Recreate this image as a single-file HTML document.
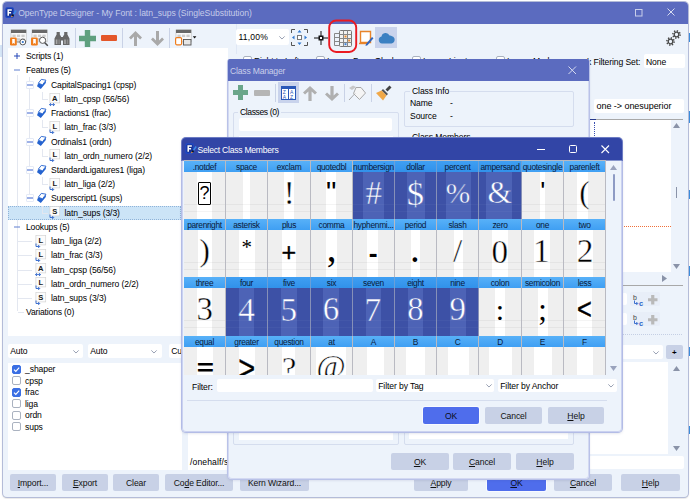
<!DOCTYPE html><html><head><meta charset="utf-8"><title>OpenType Designer</title><style>
*{box-sizing:border-box;margin:0;padding:0}
html,body{width:690px;height:499px;overflow:hidden;background:#fff}
body{position:relative;font-family:"Liberation Sans",sans-serif;font-size:8.6px;color:#000;letter-spacing:-0.1px;line-height:11px}
.a{position:absolute}
.t{position:absolute;white-space:nowrap;line-height:11px;height:11px}
.btn{position:absolute;background:#c8d1e6;border-radius:2px;text-align:center;line-height:17px;height:17px;color:#111;white-space:nowrap}
.btn.def{background:#4f6dec;color:#0b0d20;box-shadow:0 0 0 1px #f8faff}
.wh{position:absolute;background:#fff}
.inp{position:absolute;background:#fff;border-radius:2px}
u{text-decoration:underline;text-underline-offset:1px}
.gh{position:absolute;height:11px;background:linear-gradient(#58b1f8,#3f9ff3);color:#0a1a3a;text-align:center;line-height:12px;overflow:hidden;white-space:nowrap;font-size:8.4px;letter-spacing:-0.3px}
.gh.sel{background:linear-gradient(#3f9ff3,#3191ea);box-shadow:1px 0 0 #6a9fd8}
.gc{position:absolute;height:47px;background:#efefef;overflow:hidden}
.gc i{position:absolute;top:0;bottom:0;background:#fff}
.gc u{position:absolute;left:0;right:0;height:1px;background:rgba(0,0,0,.045)}
.gc.sel u{background:rgba(255,255,255,.035)}
.gc.sel{background:#3d51a6;box-shadow:1px 0 0 #8690b8}
.gc.sel i{background:#4d63b6}
.gc b{position:absolute;font-weight:normal;letter-spacing:0;color:#000;white-space:nowrap;-webkit-text-stroke:0.45px #fff}
.gc.sel b{color:#fff;-webkit-text-stroke:0.45px #4d63b6}
.vs{position:absolute;width:1px;background:#c9d2e6}
.cb{position:absolute;width:9px;height:9px;border:1px solid #aab2c0;border-radius:2px;background:#fff}
.cb.on{background:#3a6fe4;border-color:#3a6fe4}
.chev{position:absolute;width:6px;height:3.5px}
svg{position:absolute;overflow:visible}
</style></head><body>
<div class="a" style="left:0px;top:45px;width:2px;height:12px;background:#d6e6f7"></div>
<div class="a" style="left:688px;top:33px;width:2px;height:9px;background:#3c8fe0"></div>
<div class="a" style="left:688px;top:111px;width:2px;height:12px;background:#3c8fe0"></div>
<div class="a" style="left:688px;top:190px;width:2px;height:9px;background:#3c8fe0"></div>
<div class="a" style="left:688px;top:266px;width:2px;height:10px;background:#3c8fe0"></div>
<div class="a" style="left:688px;top:347px;width:2px;height:9px;background:#3c8fe0"></div>
<div class="a" style="left:688px;top:426px;width:2px;height:8px;background:#3c8fe0"></div>
<div class="a" style="left:3px;top:2px;width:685px;height:495px;background:#edf3fb;border-radius:4px;box-shadow:0 0 0 1px #b4bcd8,0 1px 2px rgba(0,0,0,.3)"></div>
<div class="a" style="left:3px;top:2px;width:685px;height:22px;background:#5b6bbf;border-radius:4px 4px 0 0"></div>
<div class="t" style="left:18.2px;top:8.0px;color:#c5cbe9;letter-spacing:-0.04px">OpenType Designer - My Font : latn_sups (SingleSubstitution)</div>
<svg style="left:5px;top:7px" width="12" height="12" viewBox="0 0 12 12"><rect x="0.300" y="0.300" width="8.600" height="10.600" rx="1.600" fill="#1f49c6"/><rect x="1.500" y="1.600" width="6.200" height="8" rx="0.800" fill="#16308f"/><path d="M3.200 8.800V2.900h3.600M3.200 5.700h2.900" stroke="#fff" stroke-width="1.500" fill="none"/><path d="M5.600 10.600l1.200-2 1.300 0.900z" fill="#f39a2c"/><path d="M6.800 8.600l1.100-1.700 1.300 0.900-1.100 1.700z" fill="#111"/><path d="M7.900 6.900l2.600-3.900 1.300 0.900-2.600 3.900z" fill="#3b8ae6"/></svg>
<svg style="left:635px;top:9px" width="9" height="9" viewBox="0 0 9 9"><rect x="0.5" y="0.5" width="6.5" height="6.5" fill="none" stroke="#c9cfea"/></svg>
<svg style="left:667px;top:8px" width="9" height="9" viewBox="0 0 9 9"><path d="M0.5 0.5L7.5 7.5M7.5 0.5L0.5 7.5" fill="none" stroke="#d6dbf0"/></svg>
<svg style="left:10px;top:29px" width="18" height="17" viewBox="0 0 18 17"><rect x="1" y="0.8" width="15.2" height="12" fill="#fbfbfb" stroke="#b9b9b9" stroke-width="0.6"/><rect x="1" y="0.8" width="15.2" height="3.2" fill="#686868"/><rect x="2.4" y="5.6" width="3.3" height="2.5" fill="#cdcdcd"/><rect x="2.4" y="9.2" width="3.3" height="2.5" fill="#cdcdcd"/><rect x="6.9" y="5.6" width="3.3" height="2.5" fill="#cdcdcd"/><rect x="6.9" y="9.2" width="3.3" height="2.5" fill="#cdcdcd"/><rect x="11.4" y="5.6" width="3.3" height="2.5" fill="#cdcdcd"/><rect x="11.4" y="9.2" width="3.3" height="2.5" fill="#cdcdcd"/><rect x="0" y="8.6" width="6.8" height="7.8" rx="1.2" fill="#f07d1c"/><path d="M2.2 10h2.6v5l-1.3-1-1.300 1z" fill="#fff"/><path d="M6.800 13h3" stroke="#777" stroke-width="0.8"/><circle cx="12.800" cy="13" r="2.900" fill="#fff" stroke="#4a4a4a" stroke-width="0.9"/><circle cx="12.800" cy="13" r="1.100" fill="#2a6fc9"/></svg>
<svg style="left:31px;top:29px" width="18" height="17" viewBox="0 0 18 17"><rect x="1" y="0.8" width="15.2" height="12" fill="#fbfbfb" stroke="#b9b9b9" stroke-width="0.6"/><rect x="1" y="0.8" width="15.2" height="3.2" fill="#686868"/><rect x="2.4" y="5.6" width="3.3" height="2.5" fill="#cdcdcd"/><rect x="2.4" y="9.2" width="3.3" height="2.5" fill="#cdcdcd"/><rect x="6.9" y="5.6" width="3.3" height="2.5" fill="#cdcdcd"/><rect x="6.9" y="9.2" width="3.3" height="2.5" fill="#cdcdcd"/><rect x="11.4" y="5.6" width="3.3" height="2.5" fill="#cdcdcd"/><rect x="11.4" y="9.2" width="3.3" height="2.5" fill="#cdcdcd"/><rect x="0" y="8.6" width="6.8" height="7.8" rx="1.2" fill="#f07d1c"/><path d="M2.2 10h2.6v5l-1.3-1-1.300 1z" fill="#fff"/><circle cx="11.600" cy="11.300" r="3.100" fill="#fff" stroke="#4a4a4a" stroke-width="0.9"/><path d="M13.800 13.700l3 3" stroke="#4a4a4a" stroke-width="1.500"/></svg>
<svg style="left:54px;top:31px" width="16" height="15" viewBox="0 0 16 15"><path d="M2.600 1h3.200v2.500l1.200 2v8.500H0.500V7.500l2.100-4zM10.200 1h3.200v2.500l2.100 4v6.500H9V5.500l1.200-2z" fill="#686868"/><rect x="6.500" y="6" width="3" height="3.500" fill="#686868"/><rect x="1.800" y="8.500" width="1.600" height="4.500" fill="#a9a9a9"/><rect x="4.400" y="8.500" width="1.400" height="4.500" fill="#8a8a8a"/><rect x="10.200" y="8.500" width="1.600" height="4.500" fill="#a9a9a9"/><rect x="12.800" y="8.500" width="1.400" height="4.500" fill="#8a8a8a"/></svg>
<div class="vs" style="left:75px;top:28px;width:1px;height:20px;"></div>
<svg style="left:79px;top:30px" width="17" height="17" viewBox="0 0 17 17"><path d="M5.8 0h5.4v5.8h5.8v5.4h-5.8v5.8h-5.4v-5.8h-5.8v-5.4h5.8z" fill="#5fa07f"/></svg>
<div class="a" style="left:101px;top:35px;width:16px;height:6px;background:#e4572a;border-radius:1px"></div>
<div class="vs" style="left:122px;top:28px;width:1px;height:20px;"></div>
<svg style="left:128.5px;top:30.5px" width="13" height="15" viewBox="0 0 13 15" preserveAspectRatio="none"><path d="M6.5 0L13 6.600L11.100 8.600L8 5.500V15H5V5.500L1.900 8.600L0 6.600z" fill="#a9a9a9"/></svg>
<svg style="left:150.5px;top:30.5px" width="13" height="15" viewBox="0 0 13 15" preserveAspectRatio="none"><path transform="rotate(180 6.5 7.5)" d="M6.5 0L13 6.600L11.100 8.600L8 5.500V15H5V5.500L1.900 8.600L0 6.600z" fill="#a9a9a9"/></svg>
<div class="vs" style="left:169px;top:28px;width:1px;height:20px;"></div>
<svg style="left:175px;top:29px" width="24" height="17" viewBox="0 0 24 17"><rect x="1" y="0.800" width="15.200" height="12" fill="#fbfbfb" stroke="#b9b9b9" stroke-width="0.600"/><rect x="1" y="0.800" width="15.200" height="3.200" fill="#686868"/><rect x="2.4" y="5.6" width="3.300" height="2.500" fill="#cdcdcd"/><rect x="6.9" y="5.6" width="3.300" height="2.500" fill="#cdcdcd"/><rect x="11.4" y="5.6" width="3.300" height="2.500" fill="#cdcdcd"/><rect x="0.600" y="8.600" width="6" height="7.200" rx="1.200" fill="#fff" stroke="#f07d1c" stroke-width="1.200"/><rect x="8.500" y="10.500" width="7.500" height="5.500" fill="#e6e6e6" stroke="#555" stroke-width="0.900"/><path d="M17.800 7.200h3.600l-1.800 2.300z" fill="#111"/></svg>
<div class="wh" style="left:8px;top:48px;width:220px;height:288px;"></div>
<div class="a" style="left:17px;top:75px;width:1px;height:236px;background:#e3e7f0"></div>
<div class="a" style="left:29px;top:77px;width:1px;height:120px;background:#e3e7f0"></div>
<svg style="left:13px;top:52.2px" width="8" height="8" viewBox="0 0 8 8"><path d="M1 4h6M4 1v6" stroke="#2446b8" stroke-width="1" fill="none"/></svg>
<div class="t" style="left:26px;top:51.2px;letter-spacing:-0.17px">Scripts (1)</div>
<svg style="left:13px;top:66.4px" width="8" height="8" viewBox="0 0 8 8"><path d="M1 4h6" stroke="#5f7fd0" stroke-width="1" fill="none"/></svg>
<div class="t" style="left:26px;top:65.4px;letter-spacing:-0.17px">Features (5)</div>
<div class="a" style="left:26px;top:81px;width:8px;height:8px;background:#fff;border:1px solid #e4eaf6;border-radius:1px"></div>
<svg style="left:26px;top:80.6px" width="8" height="8" viewBox="0 0 8 8"><path d="M1 4h6" stroke="#3f64cf" stroke-width="1" fill="none"/></svg>
<svg style="left:37px;top:79.3px" width="10" height="10" viewBox="0 0 10 10"><path d="M1.200 4.200L5.400 5.800L9 1.200L8.800 4L3.800 9.900L0 7.200z" fill="#2563cf"/><path d="M4.300 0.400L9 1.200L5.500 5.800L1.300 4.200z" fill="#fff" stroke="#2563cf" stroke-width="0.9" stroke-linejoin="round"/></svg>
<div class="t" style="left:51px;top:79.6px;letter-spacing:-0.17px">CapitalSpacing1 (cpsp)</div>
<div class="a" style="left:42px;top:92px;width:1px;height:8px;background:#e3e7f0"></div>
<div class="a" style="left:42px;top:99px;width:6px;height:1px;background:#e3e7f0"></div>
<svg style="left:48.5px;top:92.6px" width="12" height="14" viewBox="0 0 12 14"><rect x="0.900" y="0.500" width="9.800" height="9.400" fill="#fcfcfc" stroke="#d4d4d4" stroke-width="0.7"/><text x="5.800" y="8" font-family="Liberation Sans,sans-serif" font-weight="bold" font-size="7.600" text-anchor="middle" fill="#1a1a1a" letter-spacing="0">A</text><path d="M0.500 11.600h5M2 10.200L0.500 11.600L2 13M4 10.200L5.500 11.600L4 13" fill="none" stroke="#2a62c9" stroke-width="0.9"/></svg>
<div class="t" style="left:64.5px;top:93.9px;">latn_cpsp (56/56)</div>
<div class="a" style="left:26px;top:109px;width:8px;height:8px;background:#fff;border:1px solid #e4eaf6;border-radius:1px"></div>
<svg style="left:26px;top:109.1px" width="8" height="8" viewBox="0 0 8 8"><path d="M1 4h6" stroke="#3f64cf" stroke-width="1" fill="none"/></svg>
<svg style="left:37px;top:107.8px" width="10" height="10" viewBox="0 0 10 10"><path d="M1.200 4.200L5.400 5.800L9 1.200L8.800 4L3.800 9.900L0 7.200z" fill="#2563cf"/><path d="M4.300 0.400L9 1.200L5.500 5.800L1.300 4.200z" fill="#fff" stroke="#2563cf" stroke-width="0.9" stroke-linejoin="round"/></svg>
<div class="t" style="left:51px;top:108.1px;letter-spacing:-0.17px">Fractions1 (frac)</div>
<div class="a" style="left:42px;top:120px;width:1px;height:8px;background:#e3e7f0"></div>
<div class="a" style="left:42px;top:127px;width:6px;height:1px;background:#e3e7f0"></div>
<svg style="left:48.5px;top:121.0px" width="12" height="14" viewBox="0 0 12 14"><rect x="0.900" y="0.500" width="9.800" height="9.400" fill="#fcfcfc" stroke="#d4d4d4" stroke-width="0.7"/><text x="5.800" y="8" font-family="Liberation Sans,sans-serif" font-weight="bold" font-size="7.600" text-anchor="middle" fill="#1a1a1a" letter-spacing="0">L</text><path d="M1 8.500v3h3.500M3.200 10l1.500 1.500L3.200 13" fill="none" stroke="#2a62c9" stroke-width="0.9"/></svg>
<div class="t" style="left:64.5px;top:122.3px;">latn_frac (3/3)</div>
<div class="a" style="left:26px;top:138px;width:8px;height:8px;background:#fff;border:1px solid #e4eaf6;border-radius:1px"></div>
<svg style="left:26px;top:137.5px" width="8" height="8" viewBox="0 0 8 8"><path d="M1 4h6" stroke="#3f64cf" stroke-width="1" fill="none"/></svg>
<svg style="left:37px;top:136.2px" width="10" height="10" viewBox="0 0 10 10"><path d="M1.200 4.200L5.400 5.800L9 1.200L8.800 4L3.800 9.900L0 7.200z" fill="#2563cf"/><path d="M4.300 0.400L9 1.200L5.500 5.800L1.300 4.200z" fill="#fff" stroke="#2563cf" stroke-width="0.9" stroke-linejoin="round"/></svg>
<div class="t" style="left:51px;top:136.5px;">Ordinals1 (ordn)</div>
<div class="a" style="left:42px;top:149px;width:1px;height:8px;background:#e3e7f0"></div>
<div class="a" style="left:42px;top:156px;width:6px;height:1px;background:#e3e7f0"></div>
<svg style="left:48.5px;top:149.4px" width="12" height="14" viewBox="0 0 12 14"><rect x="0.900" y="0.500" width="9.800" height="9.400" fill="#fcfcfc" stroke="#d4d4d4" stroke-width="0.7"/><text x="5.800" y="8" font-family="Liberation Sans,sans-serif" font-weight="bold" font-size="7.600" text-anchor="middle" fill="#1a1a1a" letter-spacing="0">L</text><path d="M1 8.500v3h3.500M3.200 10l1.500 1.500L3.200 13" fill="none" stroke="#2a62c9" stroke-width="0.9"/></svg>
<div class="t" style="left:64.5px;top:150.7px;">latn_ordn_numero (2/2)</div>
<div class="a" style="left:26px;top:166px;width:8px;height:8px;background:#fff;border:1px solid #e4eaf6;border-radius:1px"></div>
<svg style="left:26px;top:166.0px" width="8" height="8" viewBox="0 0 8 8"><path d="M1 4h6" stroke="#3f64cf" stroke-width="1" fill="none"/></svg>
<svg style="left:37px;top:164.7px" width="10" height="10" viewBox="0 0 10 10"><path d="M1.200 4.200L5.400 5.800L9 1.200L8.800 4L3.800 9.900L0 7.200z" fill="#2563cf"/><path d="M4.300 0.400L9 1.200L5.500 5.800L1.300 4.200z" fill="#fff" stroke="#2563cf" stroke-width="0.9" stroke-linejoin="round"/></svg>
<div class="t" style="left:51px;top:165.0px;">StandardLigatures1 (liga)</div>
<div class="a" style="left:42px;top:177px;width:1px;height:8px;background:#e3e7f0"></div>
<div class="a" style="left:42px;top:184px;width:6px;height:1px;background:#e3e7f0"></div>
<svg style="left:48.5px;top:177.9px" width="12" height="14" viewBox="0 0 12 14"><rect x="0.900" y="0.500" width="9.800" height="9.400" fill="#fcfcfc" stroke="#d4d4d4" stroke-width="0.7"/><text x="5.800" y="8" font-family="Liberation Sans,sans-serif" font-weight="bold" font-size="7.600" text-anchor="middle" fill="#1a1a1a" letter-spacing="0">L</text><path d="M1 8.500v3h3.500M3.200 10l1.500 1.500L3.200 13" fill="none" stroke="#2a62c9" stroke-width="0.9"/></svg>
<div class="t" style="left:64.5px;top:179.2px;">latn_liga (2/2)</div>
<div class="a" style="left:26px;top:194px;width:8px;height:8px;background:#fff;border:1px solid #e4eaf6;border-radius:1px"></div>
<svg style="left:26px;top:194.4px" width="8" height="8" viewBox="0 0 8 8"><path d="M1 4h6" stroke="#3f64cf" stroke-width="1" fill="none"/></svg>
<svg style="left:37px;top:193.1px" width="10" height="10" viewBox="0 0 10 10"><path d="M1.200 4.200L5.400 5.800L9 1.200L8.800 4L3.800 9.900L0 7.200z" fill="#2563cf"/><path d="M4.300 0.400L9 1.200L5.500 5.800L1.300 4.200z" fill="#fff" stroke="#2563cf" stroke-width="0.9" stroke-linejoin="round"/></svg>
<div class="t" style="left:51px;top:193.4px;letter-spacing:-0.17px">Superscript1 (sups)</div>
<div class="a" style="left:8px;top:206px;width:173px;height:14px;background:#cce4f7;outline:1px dotted #8fb3d9;outline-offset:-1px"></div>
<div class="a" style="left:42px;top:206px;width:1px;height:8px;background:#e3e7f0"></div>
<div class="a" style="left:42px;top:213px;width:6px;height:1px;background:#e3e7f0"></div>
<svg style="left:48.5px;top:206.3px" width="12" height="14" viewBox="0 0 12 14"><rect x="0.900" y="0.500" width="9.800" height="9.400" fill="#fcfcfc" stroke="#d4d4d4" stroke-width="0.7"/><text x="5.800" y="8" font-family="Liberation Sans,sans-serif" font-weight="bold" font-size="7.600" text-anchor="middle" fill="#1a1a1a" letter-spacing="0">S</text><path d="M1 8.500v3h3.500M3.200 10l1.500 1.500L3.200 13" fill="none" stroke="#2a62c9" stroke-width="0.9"/></svg>
<div class="t" style="left:64.5px;top:207.6px;">latn_sups (3/3)</div>
<svg style="left:13px;top:222.8px" width="8" height="8" viewBox="0 0 8 8"><path d="M1 4h6" stroke="#5f7fd0" stroke-width="1" fill="none"/></svg>
<div class="t" style="left:26px;top:221.8px;letter-spacing:-0.17px">Lookups (5)</div>
<div class="a" style="left:18px;top:241px;width:14px;height:1px;background:#e3e7f0"></div>
<svg style="left:35px;top:234.8px" width="12" height="14" viewBox="0 0 12 14"><rect x="0.900" y="0.500" width="9.800" height="9.400" fill="#fcfcfc" stroke="#d4d4d4" stroke-width="0.7"/><text x="5.800" y="8" font-family="Liberation Sans,sans-serif" font-weight="bold" font-size="7.600" text-anchor="middle" fill="#1a1a1a" letter-spacing="0">L</text><path d="M1 8.500v3h3.500M3.200 10l1.500 1.500L3.200 13" fill="none" stroke="#2a62c9" stroke-width="0.9"/></svg>
<div class="t" style="left:51px;top:236.1px;">latn_liga (2/2)</div>
<div class="a" style="left:18px;top:255px;width:14px;height:1px;background:#e3e7f0"></div>
<svg style="left:35px;top:249.0px" width="12" height="14" viewBox="0 0 12 14"><rect x="0.900" y="0.500" width="9.800" height="9.400" fill="#fcfcfc" stroke="#d4d4d4" stroke-width="0.7"/><text x="5.800" y="8" font-family="Liberation Sans,sans-serif" font-weight="bold" font-size="7.600" text-anchor="middle" fill="#1a1a1a" letter-spacing="0">L</text><path d="M1 8.500v3h3.500M3.200 10l1.500 1.500L3.200 13" fill="none" stroke="#2a62c9" stroke-width="0.9"/></svg>
<div class="t" style="left:51px;top:250.3px;">latn_frac (3/3)</div>
<div class="a" style="left:18px;top:270px;width:14px;height:1px;background:#e3e7f0"></div>
<svg style="left:35px;top:263.2px" width="12" height="14" viewBox="0 0 12 14"><rect x="0.900" y="0.500" width="9.800" height="9.400" fill="#fcfcfc" stroke="#d4d4d4" stroke-width="0.7"/><text x="5.800" y="8" font-family="Liberation Sans,sans-serif" font-weight="bold" font-size="7.600" text-anchor="middle" fill="#1a1a1a" letter-spacing="0">A</text><path d="M0.500 11.600h5M2 10.200L0.500 11.600L2 13M4 10.200L5.500 11.600L4 13" fill="none" stroke="#2a62c9" stroke-width="0.9"/></svg>
<div class="t" style="left:51px;top:264.5px;">latn_cpsp (56/56)</div>
<div class="a" style="left:18px;top:284px;width:14px;height:1px;background:#e3e7f0"></div>
<svg style="left:35px;top:277.4px" width="12" height="14" viewBox="0 0 12 14"><rect x="0.900" y="0.500" width="9.800" height="9.400" fill="#fcfcfc" stroke="#d4d4d4" stroke-width="0.7"/><text x="5.800" y="8" font-family="Liberation Sans,sans-serif" font-weight="bold" font-size="7.600" text-anchor="middle" fill="#1a1a1a" letter-spacing="0">L</text><path d="M1 8.500v3h3.500M3.200 10l1.500 1.500L3.200 13" fill="none" stroke="#2a62c9" stroke-width="0.9"/></svg>
<div class="t" style="left:51px;top:278.7px;">latn_ordn_numero (2/2)</div>
<div class="a" style="left:18px;top:298px;width:14px;height:1px;background:#e3e7f0"></div>
<svg style="left:35px;top:291.6px" width="12" height="14" viewBox="0 0 12 14"><rect x="0.900" y="0.500" width="9.800" height="9.400" fill="#fcfcfc" stroke="#d4d4d4" stroke-width="0.7"/><text x="5.800" y="8" font-family="Liberation Sans,sans-serif" font-weight="bold" font-size="7.600" text-anchor="middle" fill="#1a1a1a" letter-spacing="0">S</text><path d="M1 8.500v3h3.500M3.200 10l1.500 1.500L3.200 13" fill="none" stroke="#2a62c9" stroke-width="0.9"/></svg>
<div class="t" style="left:51px;top:292.9px;">latn_sups (3/3)</div>
<div class="a" style="left:18px;top:312px;width:6px;height:1px;background:#e3e7f0"></div>
<div class="t" style="left:26px;top:307.2px;letter-spacing:-0.17px">Variations (0)</div>
<div class="inp" style="left:8px;top:344px;width:75px;height:14px;"></div>
<div class="t" style="left:10.2px;top:346.3px;">Auto</div>
<svg class="chev" style="left:72.5px;top:349.5px" width="6" height="3.500" viewBox="0 0 7 4"><path d="M0.4 0.4 L3.5 3.5 L6.6 0.4" fill="none" stroke="#8791a6" stroke-width="1"/></svg>
<div class="inp" style="left:88px;top:344px;width:74px;height:14px;"></div>
<div class="t" style="left:90.2px;top:346.3px;">Auto</div>
<svg class="chev" style="left:150.5px;top:349.5px" width="6" height="3.500" viewBox="0 0 7 4"><path d="M0.4 0.4 L3.5 3.5 L6.6 0.4" fill="none" stroke="#8791a6" stroke-width="1"/></svg>
<div class="inp" style="left:169px;top:344px;width:60px;height:14px;"></div>
<div class="t" style="left:171.2px;top:346.3px;">Cu</div>
<div class="wh" style="left:8px;top:363px;width:174px;height:107px;"></div>
<div class="cb on" style="left:12px;top:364.5px"></div>
<svg style="left:12px;top:364.5px" width="9" height="9" viewBox="0 0 9 9"><path d="M2 4.6L3.8 6.4L7.2 2.6" fill="none" stroke="#fff" stroke-width="1.2"/></svg>
<div class="t" style="left:25px;top:364.0px;">_shaper</div>
<div class="cb" style="left:12px;top:376.05px"></div>
<div class="t" style="left:25px;top:375.6px;">cpsp</div>
<div class="cb on" style="left:12px;top:387.6px"></div>
<svg style="left:12px;top:387.6px" width="9" height="9" viewBox="0 0 9 9"><path d="M2 4.6L3.8 6.4L7.2 2.6" fill="none" stroke="#fff" stroke-width="1.2"/></svg>
<div class="t" style="left:25px;top:387.1px;">frac</div>
<div class="cb" style="left:12px;top:399.15px"></div>
<div class="t" style="left:25px;top:398.6px;">liga</div>
<div class="cb" style="left:12px;top:410.7px"></div>
<div class="t" style="left:25px;top:410.2px;">ordn</div>
<div class="cb" style="left:12px;top:422.25px"></div>
<div class="t" style="left:25px;top:421.8px;">sups</div>
<div class="wh" style="left:188px;top:363px;width:60px;height:107px;"></div>
<div class="t" style="left:190px;top:457.0px;letter-spacing:0.12px">/onehalf/s</div>
<div class="btn" style="left:10px;top:474px;width:46px;height:17px;line-height:18.4px"><u>I</u>mport...</div>
<div class="btn" style="left:62px;top:474px;width:46px;height:17px;line-height:18.4px"><u>E</u>xport</div>
<div class="btn" style="left:113px;top:474px;width:46px;height:17px;line-height:18.4px">Clear</div>
<div class="btn" style="left:165px;top:474px;width:68px;height:17px;line-height:18.4px">Co<u>d</u>e Editor...</div>
<div class="btn" style="left:240px;top:474px;width:69px;height:17px;line-height:18.4px">Kern Wizard...</div>
<div class="btn" style="left:414px;top:474px;width:54px;height:17px;line-height:18.4px"><u>A</u>pply</div>
<div class="btn def" style="left:487px;top:474px;width:59px;height:17px;line-height:18.4px"><u>O</u>K</div>
<div class="btn" style="left:554px;top:474px;width:58px;height:17px;line-height:18.4px"><u>C</u>ancel</div>
<div class="btn" style="left:621px;top:474px;width:59px;height:17px;line-height:18.4px"><u>H</u>elp</div>
<div class="a" style="left:236px;top:24px;width:1px;height:30px;background:#dfe7f5"></div>
<div class="inp" style="left:236px;top:29px;width:53px;height:16px;"></div>
<svg class="chev" style="left:278.5px;top:35.5px" width="6" height="3.500" viewBox="0 0 7 4"><path d="M0.4 0.4 L3.5 3.5 L6.6 0.4" fill="none" stroke="#8791a6" stroke-width="1"/></svg>
<div class="t" style="left:238.4px;top:32.3px;letter-spacing:0.2px">11,00%</div>
<svg style="left:291px;top:29px" width="17" height="17" viewBox="0 0 17 17"><path d="M0.5 4V0.5H4M13 0.5h3.5V4M16.5 13v3.5H13M4 16.5H0.5V13" fill="none" stroke="#555"/><rect x="6.5" y="6.500" width="4" height="4" fill="#fff" stroke="#777"/><path d="M8.500 1l2 2.500h-4zM8.500 16l2-2.500h-4zM1 8.500l2.500-2v4zM16 8.500l-2.500-2v4z" fill="#2f78d0"/></svg>
<svg style="left:314px;top:31px" width="14" height="14" viewBox="0 0 14 14"><path d="M7 0v14M0 7h14" stroke="#111" stroke-width="1"/><rect x="4.500" y="4.500" width="5" height="5" fill="#111"/><rect x="6" y="6" width="2" height="2" fill="#fff"/></svg>
<svg style="left:334px;top:30px" width="18" height="17" viewBox="0 0 18 17"><rect x="5.500" y="0.500" width="12" height="16" rx="1" fill="#f2f2f2" stroke="#777"/><path d="M5.500 4.500h12M5.500 8.500h12M5.500 12.500h12M9.500 0.500v16M13.500 0.500v16" stroke="#888" fill="none"/><path d="M0.500 3.500h5M0.500 7.500h5M0.500 11.500h5M0.500 3.500v12h5" stroke="#888" fill="none"/><rect x="10.500" y="5.500" width="2" height="2" fill="#e98a2b"/><rect x="14.200" y="9.500" width="2" height="2" fill="#e98a2b"/><rect x="10.500" y="13.200" width="2" height="2" fill="#3f7fd0"/></svg>
<svg style="left:326px;top:17px" width="34" height="39" viewBox="0 0 34 39"><rect x="3.200" y="3.500" width="27" height="31.500" rx="7" fill="none" stroke="#ea1a22" stroke-width="1.900"/></svg>
<svg style="left:358px;top:30px" width="16" height="17" viewBox="0 0 16 17"><path d="M2.500 1.500h10v11h-10z" fill="#fff" stroke="#e8842a" stroke-width="1.400"/><path d="M1 13.500h9" stroke="#e8842a" stroke-width="1.400"/><path d="M8 14l6-7 1.500 1.300-6 7-2 .6z" fill="#2f66c0"/></svg>
<div class="a" style="left:375px;top:27px;width:22px;height:21px;background:#c9d3ec"></div>
<svg style="left:378px;top:32px" width="17" height="12" viewBox="0 0 17 12"><path d="M4 11.500a3.500 3.500 0 0 1-.5-6.900A4.200 4.200 0 0 1 11.500 3.500a3.200 3.200 0 0 1 2.500 0.800A3.700 3.700 0 0 1 13.500 11.500z" fill="#3b80c2"/></svg>
<svg style="left:666px;top:30px" width="15" height="16" viewBox="0 0 15 16"><g fill="none" stroke="#4a4a4a"><circle cx="10.500" cy="4.500" r="2.300" stroke-width="1.300"/><circle cx="10.500" cy="4.500" r="3.600" stroke-width="1.600" stroke-dasharray="1.300 1.500"/><circle cx="4.500" cy="11.500" r="2.300" stroke-width="1.300"/><circle cx="4.500" cy="11.500" r="3.600" stroke-width="1.600" stroke-dasharray="1.300 1.500"/></g></svg>
<div class="cb" style="left:243px;top:56px"></div>
<div class="t" style="left:254px;top:55.8px;">Right to Left</div>
<div class="cb" style="left:316px;top:56px"></div>
<div class="t" style="left:327px;top:55.8px;">Ignore Base Glyphs</div>
<div class="cb" style="left:412px;top:56px"></div>
<div class="t" style="left:423px;top:55.8px;">Ignore Ligatures</div>
<div class="cb" style="left:496px;top:56px"></div>
<div class="t" style="left:507px;top:55.8px;">Ignore Marks</div>
<div class="t" style="left:572.5px;top:57.2px;">Mark Filtering Set:</div>
<div class="inp" style="left:644px;top:54px;width:41px;height:14px;"></div>
<div class="t" style="left:646px;top:56.6px;">None</div>
<div class="inp" style="left:594px;top:99px;width:90px;height:14px;"></div>
<div class="t" style="left:596.5px;top:101.0px;font-size:9px;letter-spacing:-0.05px">one -&gt; onesuperior</div>
<div class="a" style="left:589px;top:119px;width:94px;height:1px;background:#a8a8a8"></div>
<div class="a" style="left:589px;top:119px;width:7px;height:2px;background:#263a8c"></div>
<div class="wh" style="left:589px;top:120px;width:82px;height:152px;"></div>
<div class="a" style="left:594px;top:122px;width:0;height:16px;border-left:1px dotted #3a4fb0"></div>
<div class="a" style="left:622px;top:226px;width:49px;height:0;border-top:1px dotted #f0703a"></div>
<svg style="left:673px;top:123px" width="7" height="7" viewBox="0 0 7 7"><polygon points="0,5 3.500,0 7,5" fill="#8a93a8"/></svg>
<div class="a" style="left:676px;top:187px;width:1px;height:11px;background:#8a93a8"></div>
<svg style="left:673px;top:264px" width="7" height="7" viewBox="0 0 7 7"><polygon points="0,0 7,0 3.500,5" fill="#8a93a8"/></svg>
<svg style="left:662px;top:275px" width="7" height="7" viewBox="0 0 7 7"><polygon points="0,0 5,3.500 0,7" fill="#8a93a8"/></svg>
<div class="a" style="left:622px;top:285px;width:61px;height:1px;background:#a8a8a8"></div>
<div class="inp" style="left:622px;top:293px;width:5px;height:12px;"></div>
<div class="a" style="left:630px;top:292px;width:30px;height:14px;background:#e8eef8;border-radius:2px"></div>
<svg style="left:633px;top:294px" width="11" height="12" viewBox="0 0 11 12"><text x="0" y="6" font-size="7" font-family="Liberation Sans,sans-serif" fill="#444" letter-spacing="0">b</text><path d="M1.500 6.500v3h3M3.300 8l1.500 1.500L3.300 11" fill="none" stroke="#2a62c9" stroke-width="0.900"/><text x="6" y="11.500" font-size="7.500" font-weight="bold" font-family="Liberation Sans,sans-serif" fill="#2a62c9" letter-spacing="0">c</text></svg>
<svg style="left:648px;top:294.5px" width="9.5" height="9.5" viewBox="0 0 9.5 9.5"><path d="M3.15 0h3.2v3.15h3.15v3.2h-3.15v3.15h-3.2v-3.15h-3.15v-3.2h3.15z" fill="#b9b9b9"/></svg>
<div class="inp" style="left:622px;top:313px;width:5px;height:12px;"></div>
<div class="a" style="left:630px;top:312px;width:30px;height:14px;background:#e8eef8;border-radius:2px"></div>
<svg style="left:633px;top:314px" width="11" height="12" viewBox="0 0 11 12"><text x="0" y="6" font-size="7" font-family="Liberation Sans,sans-serif" fill="#444" letter-spacing="0">b</text><path d="M1.500 6.500v3h3M3.300 8l1.500 1.500L3.300 11" fill="none" stroke="#2a62c9" stroke-width="0.900"/><text x="6" y="11.500" font-size="7.500" font-weight="bold" font-family="Liberation Sans,sans-serif" fill="#2a62c9" letter-spacing="0">c</text></svg>
<svg style="left:648px;top:314.5px" width="9.5" height="9.5" viewBox="0 0 9.5 9.5"><path d="M3.15 0h3.2v3.15h3.15v3.2h-3.15v3.15h-3.2v-3.15h-3.15v-3.2h3.15z" fill="#b9b9b9"/></svg>
<div class="a" style="left:622px;top:334px;width:60px;height:0;border-top:1px dotted #c5cfe4"></div>
<div class="inp" style="left:622px;top:345px;width:41px;height:14px;"></div>
<svg class="chev" style="left:652.5px;top:350.5px" width="6" height="3.500" viewBox="0 0 7 4"><path d="M0.4 0.4 L3.5 3.5 L6.6 0.4" fill="none" stroke="#8791a6" stroke-width="1"/></svg>
<div class="a" style="left:666px;top:345px;width:17px;height:14px;background:#c8d1e6;border-radius:2px"></div>
<div class="t" style="left:672px;top:347.0px;font-weight:bold;font-size:8px">+</div>
<div class="wh" style="left:589px;top:362px;width:79px;height:92px;"></div>
<svg style="left:673px;top:366px" width="7" height="7" viewBox="0 0 7 7"><polygon points="0,5 3.500,0 7,5" fill="#8a93a8"/></svg>
<svg style="left:673px;top:446px" width="7" height="7" viewBox="0 0 7 7"><polygon points="0,0 7,0 3.500,5" fill="#8a93a8"/></svg>
<div class="inp" style="left:589px;top:456px;width:95px;height:13px;"></div>
<div class="a" style="left:228px;top:60px;width:361px;height:419px;background:#edf3fb;border-radius:2px 2px 4px 4px;box-shadow:0 0 0 1px #b9c2e8,inset 0 0 0 1px #d3d9f2,0 1px 3px rgba(60,70,120,.2)"></div>
<div class="a" style="left:228px;top:59px;width:361px;height:22px;background:#5b6bbf;border-radius:2px 2px 0 0"></div>
<div class="t" style="left:230px;top:66.3px;color:#c9cfea;letter-spacing:-0.2px">Class Manager</div>
<svg style="left:568px;top:66px" width="9" height="9" viewBox="0 0 9 9"><path d="M0.500 0.500L8 8M8 0.500L0.500 8" fill="none" stroke="#d6dbf0"/></svg>
<svg style="left:233px;top:85px" width="15" height="15" viewBox="0 0 15 15"><path d="M5.0 0h5v5.0h5.0v5h-5.0v5.0h-5v-5.0h-5.0v-5h5.0z" fill="#6aa68a"/></svg>
<div class="a" style="left:254px;top:90px;width:16px;height:6px;background:#b5b5b5;border-radius:1px"></div>
<div class="vs" style="left:275px;top:84px;width:1px;height:18px;"></div>
<div class="a" style="left:278px;top:82px;width:21px;height:21px;background:#c9d3ec"></div>
<svg style="left:281px;top:86px" width="15" height="14" viewBox="0 0 15 14"><rect x="0.500" y="0.500" width="14" height="13" fill="#fff" stroke="#2a58b8"/><rect x="0.500" y="0.500" width="14" height="2.500" fill="#2a58b8"/><path d="M7.500 3v10.500" stroke="#2a58b8"/><text x="1.800" y="8" font-size="5" font-family="Liberation Sans,sans-serif" fill="#2a58b8" letter-spacing="0">Z</text><text x="1.800" y="12.800" font-size="5" font-family="Liberation Sans,sans-serif" fill="#2a58b8" letter-spacing="0">A</text><text x="9" y="8" font-size="5" font-family="Liberation Sans,sans-serif" fill="#2a58b8" letter-spacing="0">A</text><text x="9" y="12.800" font-size="5" font-family="Liberation Sans,sans-serif" fill="#2a58b8" letter-spacing="0">Z</text></svg>
<svg style="left:303px;top:86px" width="14" height="15" viewBox="0 0 13 15" preserveAspectRatio="none"><path d="M6.5 0L13 6.600L11.100 8.600L8 5.500V15H5V5.500L1.900 8.600L0 6.600z" fill="#b0b0b0"/></svg>
<svg style="left:324.5px;top:86px" width="14" height="15" viewBox="0 0 13 15" preserveAspectRatio="none"><path transform="rotate(180 6.5 7.5)" d="M6.5 0L13 6.600L11.100 8.600L8 5.500V15H5V5.500L1.900 8.600L0 6.600z" fill="#b0b0b0"/></svg>
<div class="vs" style="left:344px;top:84px;width:1px;height:18px;"></div>
<svg style="left:348px;top:85px" width="18" height="16" viewBox="0 0 18 16"><path d="M1 3l4-2.500 3 1.500 -4 3z" fill="#c8c8c8"/><path d="M8 2.500h5l4.500 5.500-6 6.500-6-6z" fill="#f5f5f5" stroke="#a8a8a8"/><path d="M1 15l6-6.500" stroke="#a8a8a8"/></svg>
<div class="vs" style="left:371px;top:84px;width:1px;height:18px;"></div>
<svg style="left:376px;top:85px" width="16" height="16" viewBox="0 0 16 16"><path d="M9.500 4.500l4-4 2 2-4 4z" fill="#444"/><path d="M7 4l5 5-1.500 1.500-5-5z" fill="#555"/><path d="M5.500 5.500l5 5-3.500 5-7-7.500z" fill="#f0a848"/></svg>
<div class="a" style="left:233px;top:112px;width:166px;height:333px;border:1px solid #d5ddee;border-radius:2px"></div>
<div class="a" style="left:238px;top:106px;width:43px;height:12px;background:#edf3fb"></div>
<div class="t" style="left:240px;top:107.0px;letter-spacing:-0.4px">Classes (0)</div>
<div class="inp" style="left:239px;top:118px;width:153px;height:13px;"></div>
<div class="wh" style="left:239px;top:136px;width:154px;height:304px;"></div>
<div class="a" style="left:404px;top:91px;width:170px;height:36px;border:1px solid #d5ddee;border-radius:2px"></div>
<div class="a" style="left:410px;top:85px;width:40px;height:12px;background:#edf3fb"></div>
<div class="t" style="left:412px;top:86.0px;">Class Info</div>
<div class="t" style="left:410px;top:98.0px;">Name</div>
<div class="t" style="left:450px;top:98.0px;">-</div>
<div class="t" style="left:410px;top:111.0px;">Source</div>
<div class="t" style="left:450px;top:111.0px;">-</div>
<div class="a" style="left:404px;top:138px;width:170px;height:307px;border:1px solid #d5ddee;border-radius:2px"></div>
<div class="a" style="left:410px;top:131px;width:62px;height:12px;background:#edf3fb"></div>
<div class="t" style="left:412px;top:132.0px;">Class Members</div>
<div class="wh" style="left:409px;top:144px;width:159px;height:295px;"></div>
<div class="btn" style="left:391px;top:453px;width:58px;height:17px;line-height:18.4px"><u>O</u>K</div>
<div class="btn" style="left:453px;top:453px;width:58px;height:17px;line-height:18.4px"><u>C</u>ancel</div>
<div class="btn" style="left:516px;top:453px;width:58px;height:17px;line-height:18.4px"><u>H</u>elp</div>
<div class="a" style="left:182px;top:138px;width:440px;height:294px;background:#edf3fb;border-radius:4px;box-shadow:0 0 0 1px #b3bce6,inset 0 0 0 1px #cbd2f0,0 1px 3px rgba(60,70,120,.25)"></div>
<div class="a" style="left:182px;top:138px;width:440px;height:22px;background:#3245a6;border-radius:4px 4px 0 0;box-shadow:0 0 0 1px rgba(50,69,166,.55)"></div>
<svg style="left:185px;top:143px" width="12" height="12" viewBox="0 0 12 12"><rect x="0.300" y="0.300" width="8.600" height="10.600" rx="1.600" fill="#1f49c6"/><rect x="1.500" y="1.600" width="6.200" height="8" rx="0.800" fill="#16308f"/><path d="M3.200 8.800V2.900h3.600M3.200 5.700h2.900" stroke="#fff" stroke-width="1.500" fill="none"/><path d="M5.600 10.600l1.200-2 1.300 0.900z" fill="#f39a2c"/><path d="M6.800 8.600l1.100-1.700 1.300 0.900-1.100 1.700z" fill="#111"/><path d="M7.900 6.900l2.600-3.900 1.300 0.900-2.600 3.900z" fill="#3b8ae6"/></svg>
<div class="t" style="left:197.5px;top:144.5px;color:#fff;letter-spacing:-0.25px">Select Class Members</div>
<div class="a" style="left:537px;top:149px;width:8px;height:1px;background:#fff"></div>
<svg style="left:569px;top:145px" width="9" height="9" viewBox="0 0 9 9"><rect x="0.500" y="0.500" width="7" height="7" rx="1" fill="none" stroke="#fff"/></svg>
<svg style="left:601px;top:145px" width="9" height="9" viewBox="0 0 9 9"><path d="M0.500 0.500L8 8M8 0.500L0.500 8" fill="none" stroke="#fff" stroke-width="1.100"/></svg>
<div class="a" style="left:184px;top:160px;width:422px;height:215px;background:#b9bac2;overflow:hidden"></div>
<div class="gh" style="left:184px;top:161px;width:41px">.notdef</div>
<div class="gc" style="left:184px;top:172px;width:41px;height:47px"><i style="left:13px;width:15px"></i><u style="top:32px"></u><u style="top:39px"></u><span class="a" style="left:14px;top:10px;width:13px;height:23px;border:1px solid #000;border-radius:1px;background:#fff;font-family:Liberation Sans,sans-serif;font-size:18px;line-height:21px;text-align:center;letter-spacing:0">?</span></div>
<div class="gh" style="left:226px;top:161px;width:41px">space</div>
<div class="gc" style="left:226px;top:172px;width:41px;height:47px"><i style="left:17px;width:7px"></i><u style="top:32px"></u><u style="top:39px"></u></div>
<div class="gh" style="left:268px;top:161px;width:42px">exclam</div>
<div class="gc" style="left:268px;top:172px;width:42px;height:47px"><i style="left:16px;width:10px"></i><u style="top:32px"></u><u style="top:39px"></u><b style="left:15.7px;top:4.8px;font-size:32.7px;line-height:32.7px;font-family:'Liberation Serif',serif">!</b></div>
<div class="gh" style="left:311px;top:161px;width:41px">quotedbl</div>
<div class="gc" style="left:311px;top:172px;width:41px;height:47px"><i style="left:15px;width:10px"></i><u style="top:32px"></u><u style="top:39px"></u><b style="left:15.0px;top:4.7px;font-size:29.3px;line-height:29.3px;font-family:'Liberation Sans',sans-serif;-webkit-text-stroke:0">"</b></div>
<div class="gh sel" style="left:353px;top:161px;width:41px">numbersign</div>
<div class="gc sel" style="left:353px;top:172px;width:41px;height:47px"><i style="left:10px;width:21px"></i><u style="top:32px"></u><u style="top:39px"></u><b style="left:12.4px;top:5.3px;font-size:33.0px;line-height:33.0px;font-family:'Liberation Serif',serif">#</b></div>
<div class="gh sel" style="left:395px;top:161px;width:41px">dollar</div>
<div class="gc sel" style="left:395px;top:172px;width:41px;height:47px"><i style="left:12px;width:18px"></i><u style="top:32px"></u><u style="top:39px"></u><b style="left:11.8px;top:3.9px;font-size:34.5px;line-height:34.5px;font-family:'Liberation Serif',serif">$</b></div>
<div class="gh sel" style="left:437px;top:161px;width:41px">percent</div>
<div class="gc sel" style="left:437px;top:172px;width:41px;height:47px"><i style="left:9px;width:25px"></i><u style="top:32px"></u><u style="top:39px"></u><b style="left:8.8px;top:6.5px;font-size:29.4px;line-height:29.4px;font-family:'Liberation Serif',serif">%</b></div>
<div class="gh sel" style="left:479px;top:161px;width:42px">ampersand</div>
<div class="gc sel" style="left:479px;top:172px;width:42px;height:47px"><i style="left:7px;width:26px"></i><u style="top:32px"></u><u style="top:39px"></u><b style="left:8.4px;top:5.4px;font-size:31.6px;line-height:31.6px;font-family:'Liberation Serif',serif">&amp;</b></div>
<div class="gh" style="left:522px;top:161px;width:41px">quotesingle</div>
<div class="gc" style="left:522px;top:172px;width:41px;height:47px"><i style="left:18px;width:5px"></i><u style="top:32px"></u><u style="top:39px"></u><b style="left:18.3px;top:5.5px;font-size:26.7px;line-height:26.7px;font-family:'Liberation Sans',sans-serif;-webkit-text-stroke:0">'</b></div>
<div class="gh" style="left:564px;top:161px;width:41px">parenleft</div>
<div class="gc" style="left:564px;top:172px;width:41px;height:47px"><i style="left:13px;width:11px"></i><u style="top:32px"></u><u style="top:39px"></u><b style="left:15.3px;top:5.2px;font-size:31.8px;line-height:31.8px;font-family:'Liberation Serif',serif">(</b></div>
<div class="gh" style="left:184px;top:219px;width:41px">parenright</div>
<div class="gc" style="left:184px;top:230px;width:41px;height:47px"><i style="left:14px;width:14px"></i><u style="top:32px"></u><u style="top:39px"></u><b style="left:15.3px;top:4.2px;font-size:32.2px;line-height:32.2px;font-family:'Liberation Serif',serif">)</b></div>
<div class="gh" style="left:226px;top:219px;width:41px">asterisk</div>
<div class="gc" style="left:226px;top:230px;width:41px;height:47px"><i style="left:13px;width:16px"></i><u style="top:32px"></u><u style="top:39px"></u><b style="left:15.6px;top:6.5px;font-size:21.0px;line-height:21.0px;font-family:'Liberation Serif',serif;-webkit-text-stroke:0">*</b></div>
<div class="gh" style="left:268px;top:219px;width:42px">plus</div>
<div class="gc" style="left:268px;top:230px;width:42px;height:47px"><i style="left:14px;width:14px"></i><u style="top:32px"></u><u style="top:39px"></u><b style="left:13.4px;top:9.6px;font-size:25.1px;line-height:25.1px;font-family:'Liberation Sans',sans-serif;-webkit-text-stroke:0.35px #000">+</b></div>
<div class="gh" style="left:311px;top:219px;width:41px">comma</div>
<div class="gc" style="left:311px;top:230px;width:41px;height:47px"><i style="left:15px;width:11px"></i><u style="top:32px"></u><u style="top:39px"></u><b style="left:15.7px;top:-1.6px;font-size:39.2px;line-height:39.2px;font-family:'Liberation Serif',serif;-webkit-text-stroke:0">,</b></div>
<div class="gh" style="left:353px;top:219px;width:41px">hyphenmi...</div>
<div class="gc" style="left:353px;top:230px;width:41px;height:47px"><i style="left:14px;width:11px"></i><u style="top:32px"></u><u style="top:39px"></u><b style="left:15.8px;top:9.8px;font-size:26.5px;line-height:26.5px;font-family:'Liberation Sans',sans-serif;font-weight:bold;-webkit-text-stroke:0">-</b></div>
<div class="gh" style="left:395px;top:219px;width:41px">period</div>
<div class="gc" style="left:395px;top:230px;width:41px;height:47px"><i style="left:16px;width:9px"></i><u style="top:32px"></u><u style="top:39px"></u><b style="left:15.1px;top:-0.9px;font-size:39.1px;line-height:39.1px;font-family:'Liberation Serif',serif;-webkit-text-stroke:0">.</b></div>
<div class="gh" style="left:437px;top:219px;width:41px">slash</div>
<div class="gc" style="left:437px;top:230px;width:41px;height:47px"><i style="left:17px;width:9px"></i><u style="top:32px"></u><u style="top:39px"></u><b style="left:16.0px;top:4.4px;font-size:33.4px;line-height:33.4px;font-family:'Liberation Serif',serif">/</b></div>
<div class="gh" style="left:479px;top:219px;width:42px">zero</div>
<div class="gc" style="left:479px;top:230px;width:42px;height:47px"><i style="left:13px;width:16px"></i><u style="top:32px"></u><u style="top:39px"></u><b style="left:12.6px;top:4.6px;font-size:33.2px;line-height:33.2px;font-family:'Liberation Serif',serif">0</b></div>
<div class="gh" style="left:522px;top:219px;width:41px">one</div>
<div class="gc" style="left:522px;top:230px;width:41px;height:47px"><i style="left:12px;width:16px"></i><u style="top:32px"></u><u style="top:39px"></u><b style="left:11.1px;top:4.3px;font-size:33.5px;line-height:33.5px;font-family:'Liberation Serif',serif">1</b></div>
<div class="gh" style="left:564px;top:219px;width:41px">two</div>
<div class="gc" style="left:564px;top:230px;width:41px;height:47px"><i style="left:13px;width:16px"></i><u style="top:32px"></u><u style="top:39px"></u><b style="left:12.8px;top:4.4px;font-size:33.4px;line-height:33.4px;font-family:'Liberation Serif',serif">2</b></div>
<div class="gh" style="left:184px;top:277px;width:41px">three</div>
<div class="gc" style="left:184px;top:288px;width:41px;height:48px"><i style="left:13px;width:15px"></i><u style="top:32px"></u><u style="top:39px"></u><b style="left:12.4px;top:5.1px;font-size:32.9px;line-height:32.9px;font-family:'Liberation Serif',serif">3</b></div>
<div class="gh sel" style="left:226px;top:277px;width:41px">four</div>
<div class="gc sel" style="left:226px;top:288px;width:41px;height:48px"><i style="left:13px;width:15px"></i><u style="top:32px"></u><u style="top:39px"></u><b style="left:12.3px;top:4.9px;font-size:33.2px;line-height:33.2px;font-family:'Liberation Serif',serif">4</b></div>
<div class="gh sel" style="left:268px;top:277px;width:42px">five</div>
<div class="gc sel" style="left:268px;top:288px;width:42px;height:48px"><i style="left:13px;width:16px"></i><u style="top:32px"></u><u style="top:39px"></u><b style="left:12.5px;top:4.9px;font-size:33.2px;line-height:33.2px;font-family:'Liberation Serif',serif">5</b></div>
<div class="gh sel" style="left:311px;top:277px;width:41px">six</div>
<div class="gc sel" style="left:311px;top:288px;width:41px;height:48px"><i style="left:12px;width:16px"></i><u style="top:32px"></u><u style="top:39px"></u><b style="left:11.7px;top:5.1px;font-size:32.9px;line-height:32.9px;font-family:'Liberation Serif',serif">6</b></div>
<div class="gh sel" style="left:353px;top:277px;width:41px">seven</div>
<div class="gc sel" style="left:353px;top:288px;width:41px;height:48px"><i style="left:13px;width:15px"></i><u style="top:32px"></u><u style="top:39px"></u><b style="left:11.6px;top:4.8px;font-size:33.3px;line-height:33.3px;font-family:'Liberation Serif',serif">7</b></div>
<div class="gh sel" style="left:395px;top:277px;width:41px">eight</div>
<div class="gc sel" style="left:395px;top:288px;width:41px;height:48px"><i style="left:13px;width:15px"></i><u style="top:32px"></u><u style="top:39px"></u><b style="left:12.3px;top:5.3px;font-size:32.7px;line-height:32.7px;font-family:'Liberation Serif',serif">8</b></div>
<div class="gh sel" style="left:437px;top:277px;width:41px">nine</div>
<div class="gc sel" style="left:437px;top:288px;width:41px;height:48px"><i style="left:13px;width:16px"></i><u style="top:32px"></u><u style="top:39px"></u><b style="left:12.6px;top:5.1px;font-size:32.9px;line-height:32.9px;font-family:'Liberation Serif',serif">9</b></div>
<div class="gh" style="left:479px;top:277px;width:42px">colon</div>
<div class="gc" style="left:479px;top:288px;width:42px;height:48px"><i style="left:16px;width:10px"></i><u style="top:32px"></u><u style="top:39px"></u><b style="left:16.8px;top:6.9px;font-size:30.1px;line-height:30.1px;font-family:'Liberation Serif',serif;-webkit-text-stroke:0">:</b></div>
<div class="gh" style="left:522px;top:277px;width:41px">semicolon</div>
<div class="gc" style="left:522px;top:288px;width:41px;height:48px"><i style="left:16px;width:10px"></i><u style="top:32px"></u><u style="top:39px"></u><b style="left:16.3px;top:6.6px;font-size:30.9px;line-height:30.9px;font-family:'Liberation Serif',serif;-webkit-text-stroke:0">;</b></div>
<div class="gh" style="left:564px;top:277px;width:41px">less</div>
<div class="gc" style="left:564px;top:288px;width:41px;height:48px"><i style="left:13px;width:15px"></i><u style="top:32px"></u><u style="top:39px"></u><b style="left:13.0px;top:9.4px;font-size:25.4px;line-height:25.4px;font-family:'Liberation Sans',sans-serif;-webkit-text-stroke:0.35px #000;transform:scale(1.0,1.19);transform-origin:7.4px 13.2px">&lt;</b></div>
<div class="gh" style="left:184px;top:336px;width:41px">equal</div>
<div class="gc" style="left:184px;top:347px;width:41px;height:28px"><i style="left:13px;width:16px"></i><u style="top:32px"></u><u style="top:39px"></u><b style="left:14.6px;top:10.4px;font-size:22px;line-height:22px;font-family:'Liberation Sans',sans-serif;font-weight:bold;-webkit-text-stroke:0;transform:scale(1.34,1.0);transform-origin:6.4px 11.3px">=</b></div>
<div class="gh" style="left:226px;top:336px;width:41px">greater</div>
<div class="gc" style="left:226px;top:347px;width:41px;height:28px"><i style="left:13px;width:16px"></i><u style="top:32px"></u><u style="top:39px"></u><b style="left:12.2px;top:7.2px;font-size:29px;line-height:29px;font-family:'Liberation Sans',sans-serif;-webkit-text-stroke:0.35px #000;transform:scale(1.0,1.22);transform-origin:8.5px 15.0px">&gt;</b></div>
<div class="gh" style="left:268px;top:336px;width:42px">question</div>
<div class="gc" style="left:268px;top:347px;width:42px;height:28px"><i style="left:14px;width:13px"></i><u style="top:32px"></u><u style="top:39px"></u><b style="left:13.9px;top:5.2px;font-size:32.2px;line-height:32.2px;font-family:'Liberation Serif',serif">?</b></div>
<div class="gh" style="left:311px;top:336px;width:41px">at</div>
<div class="gc" style="left:311px;top:347px;width:41px;height:28px"><i style="left:5px;width:30px"></i><u style="top:32px"></u><u style="top:39px"></u><b style="left:5.4px;top:4.4px;font-size:31.7px;line-height:31.7px;font-family:'Liberation Serif',serif">@</b></div>
<div class="gh" style="left:353px;top:336px;width:41px">A</div>
<div class="gc" style="left:353px;top:347px;width:41px;height:28px"><i style="left:14px;width:17px"></i><u style="top:32px"></u><u style="top:39px"></u></div>
<div class="gh" style="left:395px;top:336px;width:41px">B</div>
<div class="gc" style="left:395px;top:347px;width:41px;height:28px"><i style="left:11px;width:19px"></i><u style="top:32px"></u><u style="top:39px"></u></div>
<div class="gh" style="left:437px;top:336px;width:41px">C</div>
<div class="gc" style="left:437px;top:347px;width:41px;height:28px"><i style="left:11px;width:21px"></i><u style="top:32px"></u><u style="top:39px"></u></div>
<div class="gh" style="left:479px;top:336px;width:42px">D</div>
<div class="gc" style="left:479px;top:347px;width:42px;height:28px"><i style="left:10px;width:23px"></i><u style="top:32px"></u><u style="top:39px"></u></div>
<div class="gh" style="left:522px;top:336px;width:41px">E</div>
<div class="gc" style="left:522px;top:347px;width:41px;height:28px"><i style="left:12px;width:18px"></i><u style="top:32px"></u><u style="top:39px"></u></div>
<div class="gh" style="left:564px;top:336px;width:41px">F</div>
<div class="gc" style="left:564px;top:347px;width:41px;height:28px"><i style="left:13px;width:16px"></i><u style="top:32px"></u><u style="top:39px"></u></div>
<svg style="left:610px;top:165px" width="7" height="7" viewBox="0 0 7 7"><polygon points="0,5 3.500,0 7,5" fill="#9aa3bd"/></svg>
<div class="a" style="left:613px;top:174px;width:2px;height:27px;background:#8e9bc4;border-radius:1px"></div>
<svg style="left:610px;top:366px" width="7" height="7" viewBox="0 0 7 7"><polygon points="0,0 7,0 3.500,5" fill="#9aa3bd"/></svg>
<div class="t" style="left:192px;top:381.5px;">Filter:</div>
<div class="inp" style="left:217px;top:379px;width:156px;height:13px;"></div>
<div class="inp" style="left:376px;top:379px;width:118px;height:13px;"></div>
<div class="t" style="left:378.2px;top:380.8px;">Filter by Tag</div>
<svg class="chev" style="left:486.0px;top:384.0px" width="6" height="3.500" viewBox="0 0 7 4"><path d="M0.4 0.4 L3.5 3.5 L6.6 0.4" fill="none" stroke="#8791a6" stroke-width="1"/></svg>
<div class="inp" style="left:498px;top:379px;width:119px;height:13px;"></div>
<div class="t" style="left:500.2px;top:380.8px;">Filter by Anchor</div>
<svg class="chev" style="left:608.0px;top:384.0px" width="6" height="3.500" viewBox="0 0 7 4"><path d="M0.4 0.4 L3.5 3.5 L6.6 0.4" fill="none" stroke="#8791a6" stroke-width="1"/></svg>
<div class="a" style="left:187px;top:400px;width:420px;height:1px;background:#d5ddee"></div>
<div class="btn def" style="left:423px;top:407px;width:56px;height:17px;line-height:18.4px">OK</div>
<div class="btn" style="left:485px;top:407px;width:57px;height:17px;line-height:18.4px">Cancel</div>
<div class="btn" style="left:548px;top:407px;width:56px;height:17px;line-height:18.4px"><u>H</u>elp</div>
</body></html>
